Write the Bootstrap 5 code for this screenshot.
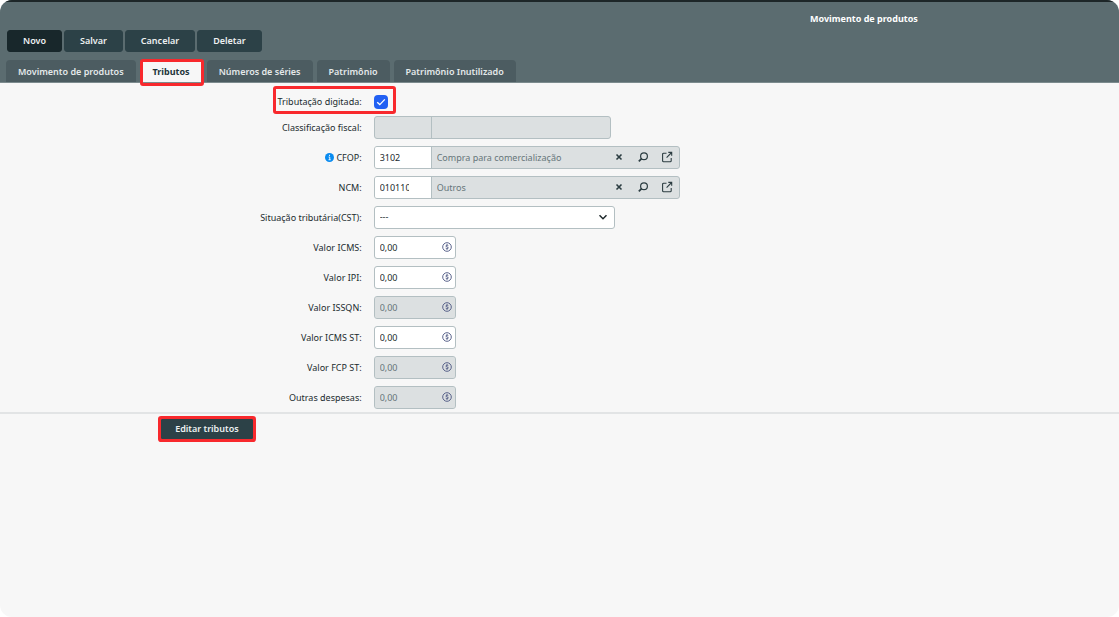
<!DOCTYPE html>
<html lang="pt-BR">
<head>
<meta charset="utf-8">
<meta name="viewport" content="width=device-width, initial-scale=1">
<title>Movimento de produtos</title>
<link href="https://cdn.jsdelivr.net/npm/bootstrap@5.3.0/dist/css/bootstrap.min.css" rel="stylesheet">
<style>
body{font-family:"Noto Sans","Open Sans",sans-serif;font-size:9px;line-height:12px;color:#212b2e;background:#fff}
.app{min-height:100vh;background:#f7f7f7;border-radius:12px;overflow:hidden}
.app-head{background:#5b6c70;border-top:2px solid #1d2628;border-bottom:1px solid #7c8b8e;padding:11px 6px 0}
.app-title{width:45%;color:#fff;font-size:9px;line-height:12px;font-weight:700}
.bar{gap:2px;padding:5px 0 0 1px}
.bar-btn{--bs-btn-color:#eef1f2;--bs-btn-bg:#2c4147;--bs-btn-border-color:#2c4147;--bs-btn-hover-color:#fff;--bs-btn-hover-bg:#22353a;--bs-btn-font-size:9px;--bs-btn-font-weight:600;--bs-btn-line-height:12px;--bs-btn-padding-x:15px;--bs-btn-padding-y:4px;--bs-btn-border-radius:3px;height:22px;line-height:12px}
.bar-btn.main-btn{--bs-btn-bg:#18272b;--bs-btn-border-color:#18272b}
.app-tabs{--bs-nav-link-padding-x:12px;--bs-nav-link-font-size:9px;--bs-nav-link-color:#e4e9ea;--bs-nav-link-hover-color:#fff;padding-top:8px;gap:4px}
.app-tabs .nav-link{background:#4c5c61;border-radius:4px 4px 0 0;font-weight:600;line-height:12px;padding-top:6px;padding-bottom:4px}
.app-tabs .nav-link.active{background:#f7f7f7;color:#22353a;font-weight:700;position:relative;padding-left:13px;padding-right:13px}
.app-tabs .nav-link.active::after{content:"";position:absolute;inset:-1px -1px -4px 0;border:3px solid #f8292d;border-radius:3px;z-index:2}
.form-area{padding:8px 0 0 1px;border-bottom:2px solid #e2e4e5}
.line{height:30px}
.line.first{height:21px}
.line label{padding-right:12px;padding-top:1px}
.fld{height:23px;font-size:9px;line-height:12px;padding:4px 5px;border:1px solid #b3bfc2;border-radius:3px;color:#212b2e;background-color:#fff}
.fld:disabled{background-color:#dce0e1;color:#66767a}
.group{height:23px;border:1px solid #b3bfc2;border-radius:3px;background:#dce0e1;overflow:hidden}
.group input{height:21px;border:0;padding:0 5px;font-size:9px;line-height:12px;background:transparent;color:#66767a;min-width:0}
.group .code{width:57px;border-right:1px solid #b3bfc2}
.group .code.on{background:#fff;color:#212b2e}
.group .code.cut{padding-right:22px}
.w-look{width:306px}
.w-short{width:237px}
.w-sel{width:241px}
.w-money{width:82px}
.group button{border:0;background:none;padding:0 0 1px;width:14px;height:21px;line-height:0;color:#2c3d42}
.group .tools{gap:10px;padding-right:5px}
.sel{background-image:url("data:image/svg+xml,%3Csvg xmlns='http://www.w3.org/2000/svg' viewBox='0 0 10 10'%3E%3Cpath d='M1.5 3.2 5 6.7l3.5-3.5' fill='none' stroke='%23212b2e' stroke-width='1.5'/%3E%3C/svg%3E");background-size:10px 10px;background-position:right 6px center}
.coin{position:absolute;right:4px;top:6px;color:#4a5480}
.info{margin-right:2px;vertical-align:-1px}
.tick{width:14px;height:14px;margin:0;border-radius:4px;border:0;flex:none}
.form-check-input.tick[type=checkbox]{border-radius:4px}
.form-check-input.tick:checked[type=checkbox]{background-color:#2160f3;background-image:url("data:image/svg+xml,%3Csvg xmlns='http://www.w3.org/2000/svg' viewBox='0 0 14 14'%3E%3Cpath d='M3.2 7.2 5.8 9.6l5-5.2' fill='none' stroke='%23fff' stroke-width='1.3'/%3E%3C/svg%3E")}
.marker{position:absolute;left:-101px;top:-9px;width:123px;height:28px;border:3px solid #f8292d;border-radius:3px;pointer-events:none}
.foot{padding:5px 0 0 14.4%}
.edit{box-shadow:0 0 0 3px #f8292d;height:20px;--bs-btn-padding-y:3px;--bs-btn-border-radius:1px;--bs-btn-padding-x:13px}
</style>
</head>
<body>
<div class="app">
<header class="app-head">
  <h1 class="app-title ms-auto mb-0 text-center">Movimento de produtos</h1>
  <div class="d-flex bar">
    <button type="button" class="btn bar-btn main-btn">Novo</button>
    <button type="button" class="btn bar-btn">Salvar</button>
    <button type="button" class="btn bar-btn">Cancelar</button>
    <button type="button" class="btn bar-btn">Deletar</button>
  </div>
  <nav class="nav app-tabs">
    <a class="nav-link" href="#">Movimento de produtos</a>
    <a class="nav-link active" aria-current="page" href="#">Tributos</a>
    <a class="nav-link" href="#">Números de séries</a>
    <a class="nav-link" href="#">Patrimônio</a>
    <a class="nav-link" href="#">Patrimônio Inutilizado</a>
  </nav>
</header>
<svg class="d-none" aria-hidden="true">
  <symbol id="x" viewBox="0 0 12 12"><path d="M3.5 3.5l5 5M8.5 3.5l-5 5" stroke="currentColor" stroke-width="1.6"/></symbol>
  <symbol id="lens" viewBox="0 0 12 12"><g fill="none" stroke="currentColor" stroke-width="1.2"><circle cx="7" cy="5.2" r="3.4"/><path d="M4.6 7.6 1.8 10.4" stroke-width="1.7"/></g></symbol>
  <symbol id="open" viewBox="0 0 12 12"><g fill="none" stroke="currentColor" stroke-width="1.1"><path d="M5.5 2.2H2.6a1 1 0 0 0-1 1v6.6a1 1 0 0 0 1 1h6.6a1 1 0 0 0 1-1V7M7.3 1.4h3.4v3.4M10.6 1.5 5.6 6.6"/></g></symbol>
  <symbol id="coin" viewBox="0 0 10 10"><g fill="none" stroke="currentColor"><circle cx="5" cy="5" r="4.3" stroke-width=".9"/><path d="M6.3 3.6C5.9 3 3.9 2.9 3.9 4.1c0 1.1 2.4.6 2.4 1.8 0 1.1-2.1 1-2.6.3" stroke-width="1"/><path d="M5 2.2v1M5 6.8v1" stroke-width=".8"/></g></symbol>
</svg>
<main>
<form>
<div class="form-area">
  <div class="row g-0 align-items-center line first">
    <label class="col-4 text-end" for="dig">Tributação digitada:</label>
    <div class="col d-flex"><div class="position-relative d-flex"><input class="form-check-input tick" type="checkbox" id="dig" checked><span class="marker"></span></div></div>
  </div>
  <div class="row g-0 align-items-center line">
    <label class="col-4 text-end" for="cf">Classificação fiscal:</label>
    <div class="col"><div class="group d-flex w-short"><input class="code" id="cf" disabled><input class="flex-fill" aria-label="Descrição da classificação" disabled></div></div>
  </div>
  <div class="row g-0 align-items-center line">
    <label class="col-4 text-end" for="cfop"><svg width="9" height="9" viewBox="0 0 10 10" class="info" aria-hidden="true"><circle cx="5" cy="5" r="5" fill="#098bf0"/><path d="M4 4.5h1.3v3M3.9 7.5h2.4M5 2v1.3" stroke="#fff" stroke-width="1" fill="none"/></svg>CFOP:</label>
    <div class="col"><div class="group d-flex w-look"><input class="code on" id="cfop" value="3102"><input class="flex-fill" aria-label="Descrição do CFOP" value="Compra para comercialização" disabled>
      <div class="tools d-flex"><button type="button" aria-label="Limpar"><svg width="12" height="12"><use href="#x"/></svg></button><button type="button" aria-label="Pesquisar"><svg width="12" height="12"><use href="#lens"/></svg></button><button type="button" aria-label="Abrir"><svg width="12" height="12"><use href="#open"/></svg></button></div></div></div>
  </div>
  <div class="row g-0 align-items-center line">
    <label class="col-4 text-end" for="ncm">NCM:</label>
    <div class="col"><div class="group d-flex w-look"><input class="code on cut" id="ncm" value="01011010"><input class="flex-fill" aria-label="Descrição do NCM" value="Outros" disabled>
      <div class="tools d-flex"><button type="button" aria-label="Limpar"><svg width="12" height="12"><use href="#x"/></svg></button><button type="button" aria-label="Pesquisar"><svg width="12" height="12"><use href="#lens"/></svg></button><button type="button" aria-label="Abrir"><svg width="12" height="12"><use href="#open"/></svg></button></div></div></div>
  </div>
  <div class="row g-0 align-items-center line">
    <label class="col-4 text-end" for="cst">Situação tributária(CST):</label>
    <div class="col"><select class="form-select fld sel w-sel" id="cst"><option>---</option></select></div>
  </div>
  <div class="row g-0 align-items-center line">
    <label class="col-4 text-end" for="icms">Valor ICMS:</label>
    <div class="col"><div class="position-relative w-money"><input class="form-control fld" id="icms" value="0,00"><svg class="coin" width="10" height="10"><use href="#coin"/></svg></div></div>
  </div>
  <div class="row g-0 align-items-center line">
    <label class="col-4 text-end" for="ipi">Valor IPI:</label>
    <div class="col"><div class="position-relative w-money"><input class="form-control fld" id="ipi" value="0,00"><svg class="coin" width="10" height="10"><use href="#coin"/></svg></div></div>
  </div>
  <div class="row g-0 align-items-center line">
    <label class="col-4 text-end" for="issqn">Valor ISSQN:</label>
    <div class="col"><div class="position-relative w-money"><input class="form-control fld" id="issqn" value="0,00" disabled><svg class="coin" width="10" height="10"><use href="#coin"/></svg></div></div>
  </div>
  <div class="row g-0 align-items-center line">
    <label class="col-4 text-end" for="icmsst">Valor ICMS ST:</label>
    <div class="col"><div class="position-relative w-money"><input class="form-control fld" id="icmsst" value="0,00"><svg class="coin" width="10" height="10"><use href="#coin"/></svg></div></div>
  </div>
  <div class="row g-0 align-items-center line">
    <label class="col-4 text-end" for="fcp">Valor FCP ST:</label>
    <div class="col"><div class="position-relative w-money"><input class="form-control fld" id="fcp" value="0,00" disabled><svg class="coin" width="10" height="10"><use href="#coin"/></svg></div></div>
  </div>
  <div class="row g-0 align-items-center line">
    <label class="col-4 text-end" for="outras">Outras despesas:</label>
    <div class="col"><div class="position-relative w-money"><input class="form-control fld" id="outras" value="0,00" disabled><svg class="coin" width="10" height="10"><use href="#coin"/></svg></div></div>
  </div>
</div>
<div class="foot"><button type="button" class="btn bar-btn edit">Editar tributos</button></div>
</form>
</main>
</div>
<script src="https://cdn.jsdelivr.net/npm/bootstrap@5.3.0/dist/js/bootstrap.bundle.min.js"></script>
</body>
</html>
